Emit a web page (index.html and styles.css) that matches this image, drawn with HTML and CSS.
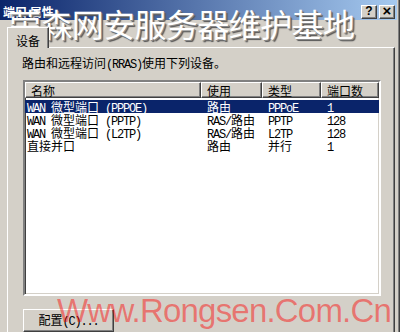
FILE: index.html
```html
<!DOCTYPE html>
<html>
<head>
<meta charset="utf-8">
<link rel="stylesheet" href="styles.css">
</head>
<body>
<div class="win">
  <div class="titlebar">
    <span class="title">端口 属性</span>
    <div class="tbtns"><span class="tb">?</span><span class="tb tbx">×</span></div>
  </div>
  <div class="tabs"><div class="tab">设备</div></div>
  <div class="panel">
    <p class="desc">路由和远程访问<span class="m">(RRAS)</span>使用下列设备。</p>
    <div class="list">
      <div class="hdr">
        <div class="hc c1">名称</div>
        <div class="hc c2">使用</div>
        <div class="hc c3">类型</div>
        <div class="hc c4">端口数</div>
      </div>
      <div class="rows">
        <div class="row sel">
          <div class="rc c1"><span class="m">WAN </span>微型端口<span class="m"> (PPPOE)</span></div>
          <div class="rc c2">路由</div>
          <div class="rc c3"><span class="m">PPPoE</span></div>
          <div class="rc c4"><span class="m">1</span></div>
        </div>
        <div class="row">
          <div class="rc c1"><span class="m">WAN </span>微型端口<span class="m"> (PPTP)</span></div>
          <div class="rc c2"><span class="m">RAS/</span>路由</div>
          <div class="rc c3"><span class="m">PPTP</span></div>
          <div class="rc c4"><span class="m">128</span></div>
        </div>
        <div class="row">
          <div class="rc c1"><span class="m">WAN </span>微型端口<span class="m"> (L2TP)</span></div>
          <div class="rc c2"><span class="m">RAS/</span>路由</div>
          <div class="rc c3"><span class="m">L2TP</span></div>
          <div class="rc c4"><span class="m">128</span></div>
        </div>
        <div class="row">
          <div class="rc c1">直接并口</div>
          <div class="rc c2">路由</div>
          <div class="rc c3">并行</div>
          <div class="rc c4"><span class="m">1</span></div>
        </div>
      </div>
    </div>
    <div class="btnrow"><button class="btn">配置<span class="m">(C)...</span></button></div>
  </div>
  <div class="wm-cn">荣森网安服务器维护基地</div>
  <div class="wm-en">Www.Rongsen.Com.Cn</div>
</div>
</body>
</html>
```

FILE: styles.css
```css
* { box-sizing: border-box; }
body {
  margin: 0;
  width: 400px;
  height: 332px;
  overflow: hidden;
  background: #d4d0c8;
  font: 12px/12px "Noto Sans CJK SC", sans-serif;
  color: #000;
}
.m {
  font-family: "Liberation Mono", monospace;
  font-size: 12px;
  letter-spacing: -1.2px;
}
.win {
  position: relative;
  width: 400px;
  height: 332px;
  overflow: hidden;
  box-shadow: inset -1px 0 #404040, inset -2px 0 #808080;
}
.titlebar {
  height: 20px;
  margin-right: 3px;
  padding: 4px 2px 1px 3px;
  background: linear-gradient(to right, #0a246a, #a6caf0);
  display: flex;
  align-items: center;
  justify-content: space-between;
}
.title {
  color: #fff;
  font-weight: bold;
  font-size: 12px;
  line-height: 12px;
}
.tbtns { display: flex; gap: 2px; }
.tb {
  width: 16px;
  height: 14px;
  background: #d4d0c8;
  border: 1px solid;
  border-color: #fff #404040 #404040 #fff;
  box-shadow: inset -1px -1px #808080;
  font: bold 12px/12px "Liberation Sans", sans-serif;
  display: flex;
  align-items: center;
  justify-content: center;
  padding-bottom: 1px;
}
.tbx { font-size: 15px; }
.tabs {
  height: 27px;
  padding: 7px 0 0 7px;
  display: flex;
  position: relative;
  z-index: 1;
}
.tab {
  width: 42px;
  height: 21px;
  padding-top: 7px;
  text-align: center;
  background: #d4d0c8;
  border-left: 1px solid #fff;
  border-top: 1px solid #fff;
  border-right: 1px solid #404040;
  box-shadow: inset -1px 0 #808080;
}
.panel {
  margin-left: 7px;
  width: 388px;
  height: 300px;
  border-left: 1px solid #fff;
  border-top: 1px solid #fff;
  border-right: 1px solid #404040;
  box-shadow: inset -1px 0 #808080;
  padding: 9px 0 0 14px;
}
.desc { margin: 0; height: 12px; }
.list {
  margin: 11px 0 0 1px;
  width: 358px;
  height: 216px;
  background: #fff;
  border: 2px solid;
  border-color: #808080 #fff #fff #808080;
  box-shadow: inset 1px 1px #404040, inset -1px -1px #d4d0c8;
  padding: 0;
}
.hdr { display: flex; height: 16px; }
.hc {
  height: 16px;
  background: #d4d0c8;
  border: 1px solid;
  border-color: #fff #404040 #404040 #fff;
  box-shadow: inset -1px -1px #808080;
  padding: 2px 0 0 5px;
}
.c1 { width: 176px; }
.c2 { width: 61px; }
.c3 { width: 59px; }
.c4 { width: 58px; }
.rows { padding-top: 2px; }
.row { display: flex; height: 13px; }
.rc { height: 13px; padding: 1px 0 0 6px; white-space: nowrap; }
.rc.c1 { padding-left: 2px; }
.row.sel { background: #0a246a; color: #fff; }
.btnrow { margin: 13px 0 0 1px; }
.btn {
  width: 91px;
  height: 23px;
  padding: 1px 0 0;
  background: #d4d0c8;
  border: 1px solid;
  border-color: #fff #404040 #404040 #fff;
  box-shadow: inset -1px -1px #808080;
  font: 12px/12px "Noto Sans CJK SC", sans-serif;
  color: #000;
  text-align: center;
}
.wm-cn {
  position: absolute;
  left: 9px;
  top: 7px;
  font: 32px/32px "Noto Sans CJK SC", sans-serif;
  letter-spacing: -0.6px;
  color: #fff;
  text-shadow: 1px 1px 0 #8a8a8a, 2px 2px 1px #555;
  white-space: nowrap;
}
.wm-en {
  position: absolute;
  left: 57px;
  top: 294px;
  font: 33px/33px "Liberation Sans", sans-serif;
  letter-spacing: -0.8px;
  color: rgba(255, 0, 0, 0.45);
  white-space: nowrap;
}
```
